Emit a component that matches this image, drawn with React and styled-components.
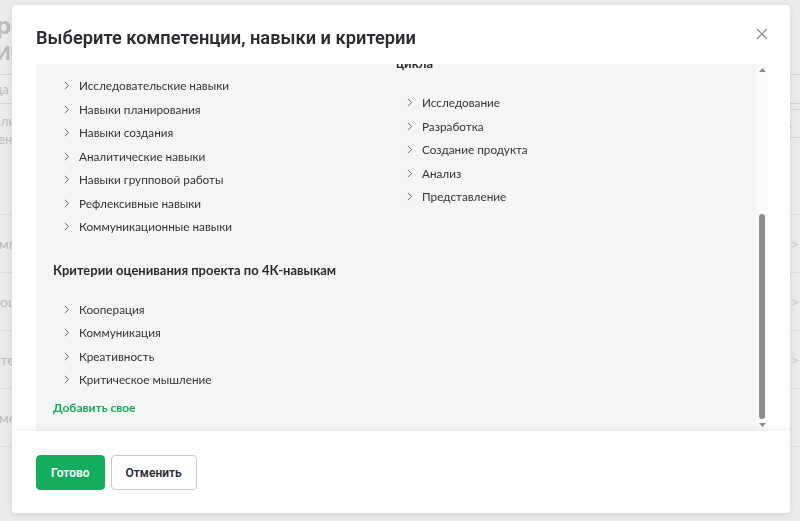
import React, { useEffect, useRef, useState } from 'react';
import styled, { createGlobalStyle } from 'styled-components';

const colors = {
  green: '#14ad5d',
  text: '#333333',
  title: '#2b2b33',
  panel: '#f5f5f5',
  faded: '#cdcdcd',
  line: '#f0f0f0',
  scroll: '#8d8d8d',
};

const GlobalStyle = createGlobalStyle`
  html, body {
    margin: 0;
    padding: 0;
    height: 100%;
    overflow: hidden;
    background: #fff;
    font-family: Lato, "Noto Sans", sans-serif;
  }
`;

/* page behind the dialog */

const Page = styled.div`
  display: flex;
  flex-direction: column;
  width: 843px;
  margin-left: -40px;
  color: ${colors.faded};
`;

const PageTitle = styled.h1`
  margin: 12px 0 0 18px;
  font-family: Inter, sans-serif;
  font-size: 24px;
  font-weight: 700;
  line-height: 28px;
`;

const PageSubtitle = styled.div`
  margin: 2px 0 0 36px;
  font-family: Inter, sans-serif;
  font-size: 19px;
  font-weight: 700;
  line-height: 24px;
`;

const SearchBox = styled.div`
  margin: 8px 0 0 0;
  height: 28px;
  border-top: 1px solid #e4e4e4;
  border-bottom: 1px solid #e4e4e4;
  display: flex;
  align-items: center;
  padding-left: 14px;
  font-size: 13px;
`;

const Toolbar = styled.div`
  display: flex;
  justify-content: space-between;
  align-items: flex-start;
  height: 110px;
  border-bottom: 1px solid ${colors.line};
  font-size: 13px;
`;

const ToolbarText = styled.div`
  margin: 8px 0 0 20px;
  line-height: 18px;
`;

const OutlineButton = styled.div`
  margin-top: 5px;
  height: 27px;
  padding: 0 12px;
  display: flex;
  align-items: center;
  border: 1px solid #e4e4e4;
  border-right: 0;
  font-size: 13px;
`;

const PageRow = styled.div`
  display: flex;
  justify-content: space-between;
  align-items: center;
  height: 57px;
  border-bottom: 1px solid ${colors.line};
  font-size: 14px;
  padding: 0 4px 0 ${p => p.$indent || 0}px;
`;

const PageChevron = styled.span`
  color: #dcdcdc;
`;

/* dialog */

const Backdrop = styled.div`
  position: fixed;
  inset: 0;
  background: rgba(0, 0, 0, 0.08);
  display: flex;
  align-items: flex-start;
  padding: 5px 0 0 12px;
`;

const Dialog = styled.div`
  width: 778px;
  height: 508px;
  background: #fff;
  border-radius: 4px;
  box-shadow: 0 2px 10px rgba(0, 0, 0, 0.1);
  display: flex;
  flex-direction: column;
  overflow: hidden;
`;

const Header = styled.div`
  display: flex;
  justify-content: space-between;
  align-items: flex-start;
  padding: 21px 22px 14px 24px;
`;

const Title = styled.h2`
  margin: 0;
  font-family: Roboto, sans-serif;
  font-size: 18.3px;
  font-weight: 600;
  line-height: 24px;
  color: ${colors.title};
`;

const CloseButton = styled.button`
  border: 0;
  background: none;
  padding: 0;
  margin-top: 2px;
  width: 12px;
  height: 12px;
  display: flex;
  cursor: pointer;
`;

const Body = styled.div`
  flex: 1;
  min-height: 0;
  display: flex;
  margin: 0 22px 0 24px;
  background: ${colors.panel};
`;

const Viewport = styled.div`
  flex: 1;
  min-width: 0;
  overflow: hidden;
`;

const ScrollBar = styled.div`
  width: 12px;
  display: flex;
  flex-direction: column;
  align-items: center;
  background: #fafafa;
`;

const ScrollArrow = styled.div`
  height: 12px;
  display: flex;
  align-items: center;
  justify-content: center;
`;

const ScrollTrack = styled.div`
  flex: 1;
  display: flex;
  flex-direction: column;
`;

const ScrollThumb = styled.div`
  width: 6px;
  border-radius: 3px;
  background: ${colors.scroll};
`;

const Content = styled.div`
  display: flex;
  flex-direction: column;
  gap: 23px;
  padding: 21px 17px 15px 17px;
`;

const Section = styled.div`
  display: grid;
  grid-template-columns: ${p => (p.$cols === 2 ? '1fr 1fr' : '1fr')};
`;

const Group = styled.div`
  display: flex;
  flex-direction: column;
  gap: 19px;
  min-width: 0;
`;

const GroupTitle = styled.h3`
  margin: 0;
  font-size: 13px;
  font-weight: 700;
  line-height: 17px;
  color: #2a2a2a;
  padding-right: 20px;
`;

const List = styled.ul`
  list-style: none;
  margin: 0;
  padding: 0;
`;

const Item = styled.li`
  display: flex;
  align-items: center;
  gap: 9px;
  height: 23.5px;
  padding-left: 11px;
  font-size: 11.75px;
  color: ${colors.text};
  cursor: pointer;
`;

const AddLink = styled.a`
  margin-top: -16px;
  font-size: 12px;
  font-weight: 700;
  line-height: 17px;
  color: ${colors.green};
  text-decoration: none;
  cursor: pointer;
`;

const Footer = styled.div`
  position: relative;
  display: flex;
  gap: 6px;
  padding: 24px 24px 23px 24px;
  box-shadow: 0 -3px 6px rgba(0, 0, 0, 0.05);
`;

const Button = styled.button`
  height: 35px;
  padding: 0 14px;
  border-radius: 4px;
  border: 1px solid ${p => (p.$primary ? colors.green : '#c9c9d1')};
  background: ${p => (p.$primary ? colors.green : '#fff')};
  color: ${p => (p.$primary ? '#fff' : '#2b2b33')};
  font-family: Roboto, sans-serif;
  font-size: 12px;
  font-weight: 600;
  cursor: pointer;
`;

const Chevron = () => (
  <svg width="6" height="9" viewBox="0 0 6 9" fill="none">
    <polyline points="1,0.8 4.6,4.5 1,8.2" stroke="#666" strokeWidth="1" />
  </svg>
);

const CloseIcon = () => (
  <svg width="12" height="12" viewBox="0 0 12 12">
    <path d="M1 1L11 11M11 1L1 11" stroke="#8a8a8a" strokeWidth="1.2" />
  </svg>
);

const Arrow = ({ down }) => (
  <svg width="7" height="4" viewBox="0 0 7 4">
    <polygon points={down ? '0,0 7,0 3.5,4' : '0,4 7,4 3.5,0'} fill="#8d8d8d" />
  </svg>
);

const sections = [
  {
    groups: [
      {
        title: 'Универсальные компетенции',
        items: [
          'Самоорганизация',
          'Самообучение',
          'Ответственность',
          'Целеустремлённость',
          'Инициативность',
          'Гибкость мышления',
        ],
      },
    ],
  },
  {
    groups: [
      {
        title: 'Метапредметные навыки',
        items: [
          'Исследовательские навыки',
          'Навыки планирования',
          'Навыки создания',
          'Аналитические навыки',
          'Навыки групповой работы',
          'Рефлексивные навыки',
          'Коммуникационные навыки',
        ],
      },
      {
        title: 'Критерии оценки навыков по этапам проектного цикла',
        items: ['Исследование', 'Разработка', 'Создание продукта', 'Анализ', 'Представление'],
      },
    ],
  },
  {
    groups: [
      {
        title: 'Критерии оценивания проекта по 4К-навыкам',
        items: ['Кооперация', 'Коммуникация', 'Креативность', 'Критическое мышление'],
      },
    ],
  },
];

const pageRows = [
  { label: 'Компетенции', arrow: true },
  { label: 'Процесс', arrow: true },
  { label: 'Интерес', arrow: true },
  { label: 'Изменения', arrow: false },
];

const App = () => {
  const viewRef = useRef(null);
  const trackRef = useRef(null);
  const [thumb, setThumb] = useState({ top: 0, height: 0 });

  // the list opens scrolled to its end; the thumb follows the viewport
  useEffect(() => {
    const view = viewRef.current;
    const track = trackRef.current;
    if (!view || !track) return;
    view.scrollTop = view.scrollHeight;
    const len = track.clientHeight;
    const height = (view.clientHeight / view.scrollHeight) * len;
    const top = (view.scrollTop / view.scrollHeight) * len;
    setThumb({ top, height });
  }, []);

  return (
    <>
      <GlobalStyle />
      <Page>
        <PageTitle>Предметы</PageTitle>
        <PageSubtitle>ИВТ</PageSubtitle>
        <SearchBox>Когда сдавать</SearchBox>
        <Toolbar>
          <ToolbarText>
            Реализация
            <br />
            Оценивание
          </ToolbarText>
          <OutlineButton>Добавить</OutlineButton>
        </Toolbar>
        {pageRows.map(r => (
          <PageRow key={r.label} $indent={22}>
            <span>{r.label}</span>
            {r.arrow && <PageChevron>&gt;</PageChevron>}
          </PageRow>
        ))}
      </Page>

      <Backdrop>
        <Dialog>
          <Header>
            <Title>Выберите компетенции, навыки и критерии</Title>
            <CloseButton aria-label="Закрыть">
              <CloseIcon />
            </CloseButton>
          </Header>

          <Body>
            <Viewport ref={viewRef}>
              <Content>
                {sections.map((section, i) => (
                  <Section key={i} $cols={section.groups.length}>
                    {section.groups.map(group => (
                      <Group key={group.title}>
                        <GroupTitle>{group.title}</GroupTitle>
                        <List>
                          {group.items.map(item => (
                            <Item key={item}>
                              <Chevron />
                              <span>{item}</span>
                            </Item>
                          ))}
                        </List>
                      </Group>
                    ))}
                  </Section>
                ))}
                <AddLink>Добавить свое</AddLink>
              </Content>
            </Viewport>
            <ScrollBar>
              <ScrollArrow>
                <Arrow />
              </ScrollArrow>
              <ScrollTrack ref={trackRef}>
                <div style={{ height: thumb.top, flexShrink: 0 }} />
                <ScrollThumb style={{ height: thumb.height }} />
              </ScrollTrack>
              <ScrollArrow>
                <Arrow down />
              </ScrollArrow>
            </ScrollBar>
          </Body>

          <Footer>
            <Button $primary>Готово</Button>
            <Button>Отменить</Button>
          </Footer>
        </Dialog>
      </Backdrop>
    </>
  );
};

export default App;
